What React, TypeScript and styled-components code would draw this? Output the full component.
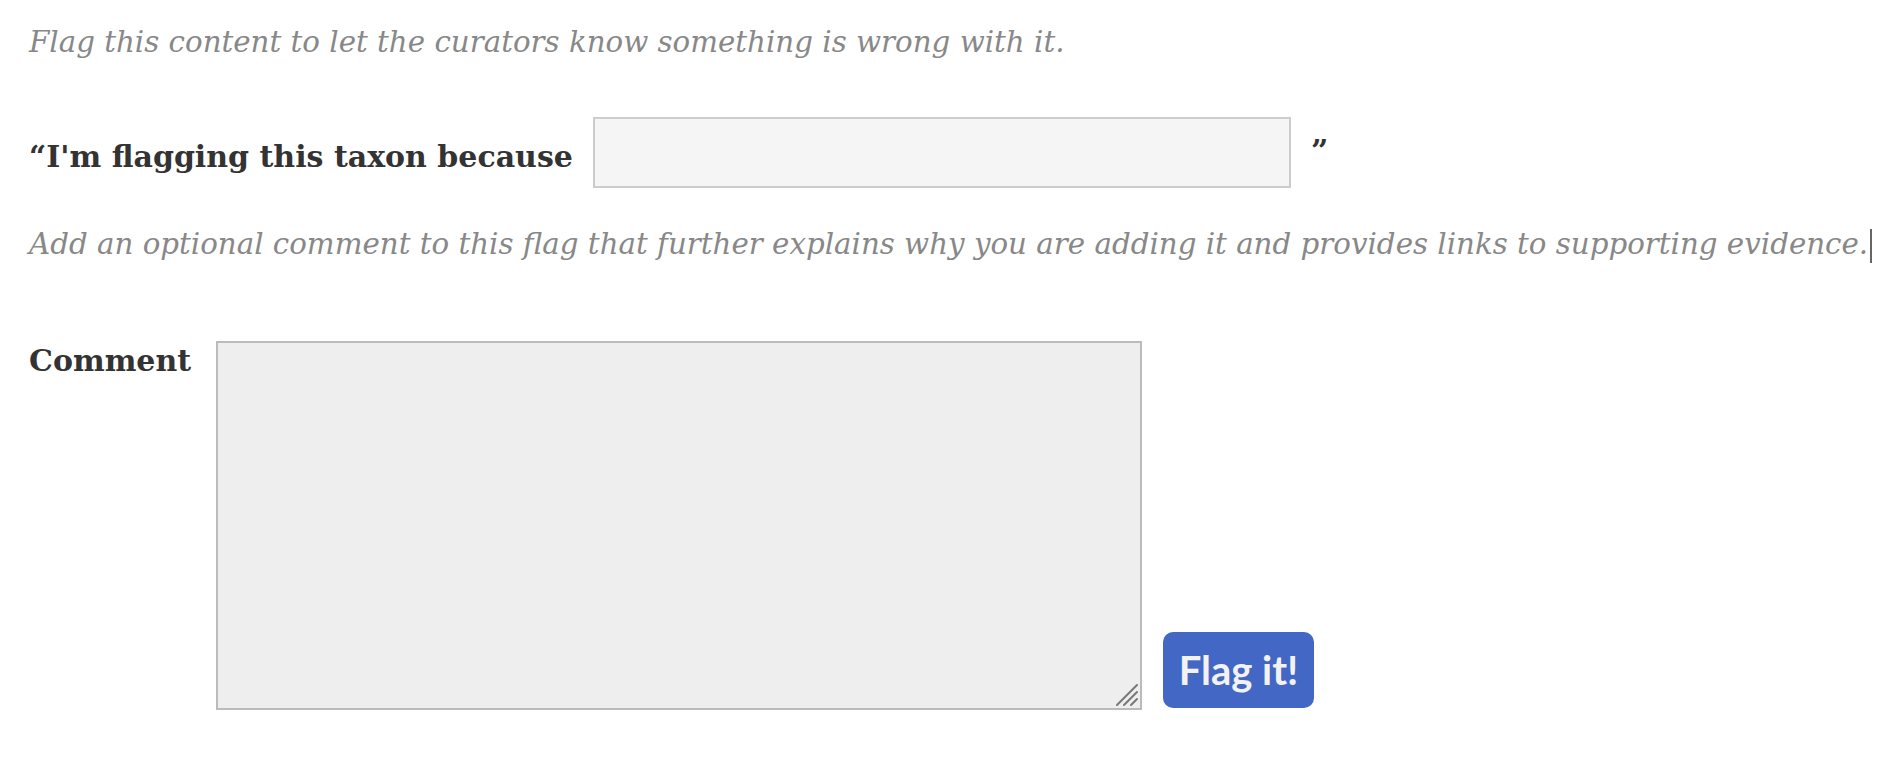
import React, { ReactElement } from "react";
import styled, { createGlobalStyle } from "styled-components";

const GlobalStyle = createGlobalStyle`
  html, body {
    margin: 0;
    padding: 0;
    background: #ffffff;
  }
`;

const PageStyled = styled.div`
  display: flex;
  flex-direction: column;
  padding: 24px 29px;
  font-family: "DejaVu Serif", Georgia, serif;
  color: #333333;
`;

const HintStyled = styled.p<{ $top?: number }>`
  margin: ${(p) => p.$top ?? 0}px 0 0;
  font-size: 29.3px;
  line-height: 36px;
  font-style: italic;
  color: #888888;
  white-space: nowrap;
`;

const CaretStyled = styled.span`
  display: inline-block;
  width: 0;
  height: 34px;
  margin-left: 2px;
  border-left: 2px solid #666666;
  vertical-align: middle;
`;

const ReasonRowStyled = styled.div`
  display: flex;
  align-items: center;
  gap: 20px;
  margin-top: 57px;
`;

const BoldLabelStyled = styled.label<{ $width?: number; $shift?: number }>`
  min-width: ${(p) => (p.$width ? `${p.$width}px` : "auto")};
  padding-top: ${(p) => p.$shift ?? 0}px;
  font-size: 30px;
  font-weight: 700;
  line-height: 40px;
  white-space: nowrap;
`;

const ReasonInputStyled = styled.input`
  box-sizing: border-box;
  width: 698px;
  height: 71px;
  border: 2px solid #cccccc;
  background: #f5f5f5;
  font-size: 22px;
  padding: 0 12px;
  outline: none;
`;

const CloseQuoteStyled = styled.span`
  font-size: 30px;
  font-weight: 700;
  line-height: 40px;
  align-self: flex-start;
  margin-top: 14px;
`;

const CommentRowStyled = styled.div`
  display: flex;
  align-items: flex-start;
  gap: 20px;
  margin-top: 78px;
`;

const AreaWrapStyled = styled.div`
  position: relative;
  display: flex;
`;

const CommentAreaStyled = styled.textarea`
  box-sizing: border-box;
  width: 926px;
  height: 369px;
  margin: 0;
  border: 2px solid #bbbbbb;
  background: #eeeeee;
  font-size: 20px;
  outline: none;
  resize: none;
`;

const GripStyled = styled.svg`
  position: absolute;
  right: 3px;
  bottom: 3px;
  width: 24px;
  height: 24px;
  pointer-events: none;
`;

const FlagButtonStyled = styled.button`
  align-self: flex-end;
  margin: 0 0 2px 1px;
  width: 151px;
  height: 76px;
  padding: 0;
  border: none;
  border-radius: 10px;
  background: #4267c4;
  color: #f2f2f2;
  font-family: Lato, "Open Sans", sans-serif;
  font-weight: 700;
  font-size: 40px;
  cursor: pointer;
`;

const texts = {
  intro: "Flag this content to let the curators know something is wrong with it.",
  reason: "\u201CI'm flagging this taxon because",
  commentHint:
    "Add an optional comment to this flag that further explains why you are adding it and provides links to supporting evidence.",
  comment: "Comment",
  button: "Flag it!",
};

const ResizeGrip = (): ReactElement => (
  <GripStyled viewBox="0 0 24 24">
    <g stroke="#777777" strokeWidth="2" strokeLinecap="round">
      <line x1="2" y1="22" x2="22" y2="2" />
      <line x1="9" y1="22" x2="22" y2="9" />
      <line x1="16" y1="22" x2="22" y2="16" />
    </g>
  </GripStyled>
);

const App = (): ReactElement => (
  <>
    <GlobalStyle />
    <PageStyled>
      <HintStyled>{texts.intro}</HintStyled>
      <ReasonRowStyled>
        <BoldLabelStyled htmlFor="flag-reason" $shift={8}>
          {texts.reason}
        </BoldLabelStyled>
        <ReasonInputStyled id="flag-reason" type="text" />
        <CloseQuoteStyled>{"\u201D"}</CloseQuoteStyled>
      </ReasonRowStyled>
      <HintStyled $top={38}>
        {texts.commentHint}
        <CaretStyled />
      </HintStyled>
      <CommentRowStyled>
        <BoldLabelStyled htmlFor="flag-comment" $width={167}>
          {texts.comment}
        </BoldLabelStyled>
        <AreaWrapStyled>
          <CommentAreaStyled id="flag-comment" />
          <ResizeGrip />
        </AreaWrapStyled>
        <FlagButtonStyled type="button">{texts.button}</FlagButtonStyled>
      </CommentRowStyled>
    </PageStyled>
  </>
);

export default App;
